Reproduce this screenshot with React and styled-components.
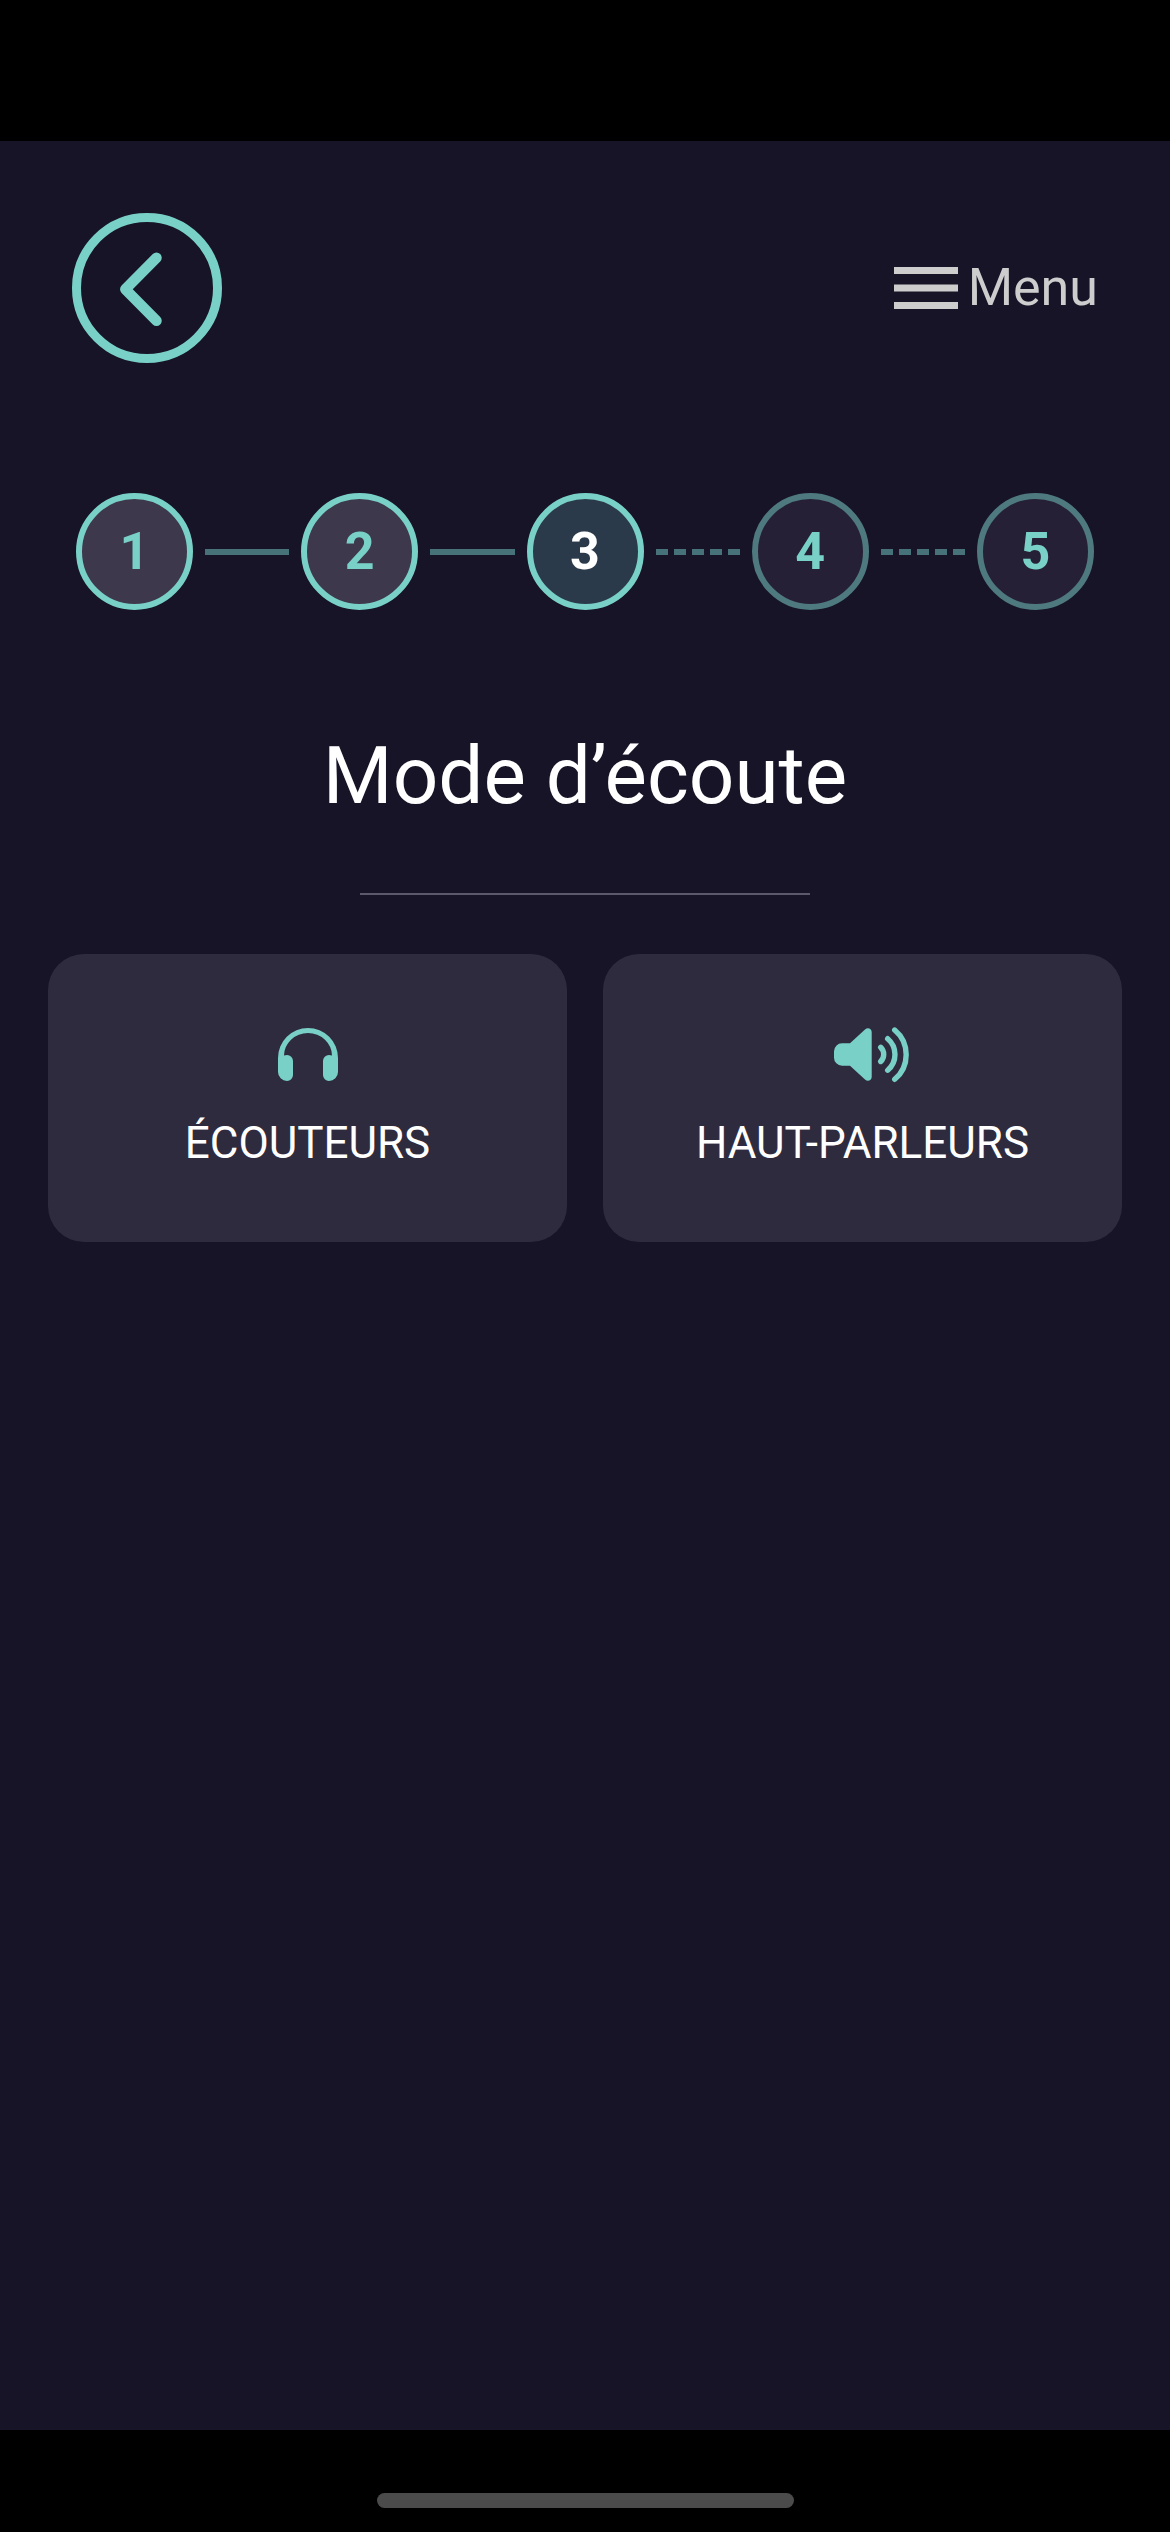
import React, { useState } from "react";
import styled, { createGlobalStyle } from "styled-components";

const steps = [
  { number: 1, status: "done" },
  { number: 2, status: "done" },
  { number: 3, status: "current" },
  { number: 4, status: "upcoming" },
  { number: 5, status: "upcoming" },
];

function App() {
  const [mode, setMode] = useState(null);

  return (
    <>
      <GlobalStyle />
      <Page>
        <StatusBar />
        <Main>
          <Header>
            <BackButton type="button" aria-label="Retour">
              <svg viewBox="0 0 132 132" aria-hidden="true">
                <path d="M75.5 35.8 44.3 67.3l31.2 31.5" />
              </svg>
            </BackButton>
            <MenuButton type="button">
              <svg viewBox="0 0 64 42" aria-hidden="true">
                <path d="M0 0h64v7H0zM0 17.5h64v7H0zM0 35h64v7H0z" />
              </svg>
              Menu
            </MenuButton>
          </Header>

          <Stepper>
            {steps.map(({ number, status }, i) => (
              <React.Fragment key={number}>
                {i > 0 && <Connector $dashed={status === "upcoming"} />}
                <Step $status={status} aria-current={status === "current" ? "step" : undefined}>
                  {number}
                </Step>
              </React.Fragment>
            ))}
          </Stepper>

          <Title>Mode d’écoute</Title>
          <Divider />

          <Choices>
            <Choice
              type="button"
              aria-pressed={mode === "headphones"}
              onClick={() => setMode("headphones")}
            >
              <HeadphonesIcon />
              Écouteurs
            </Choice>
            <Choice
              type="button"
              aria-pressed={mode === "speakers"}
              onClick={() => setMode("speakers")}
            >
              <SpeakerIcon />
              Haut-parleurs
            </Choice>
          </Choices>
        </Main>
        <BottomBar>
          <HomeIndicator />
        </BottomBar>
      </Page>
    </>
  );
}

// Icons
const HeadphonesIcon = () => (
  <svg width="60" height="54" viewBox="0 0 60 54" aria-hidden="true">
    <path
      fill="currentColor"
      d="M0 30a30 30 0 0 1 60 0v14a9 9 0 0 1-9 9 6 6 0 0 1-6-6V33a6 6 0 0 1 6-6c1 0 2 .2 3 .6a24 22.5 0 0 0-48 0C7 27.2 8 27 9 27a6 6 0 0 1 6 6v14a6 6 0 0 1-6 6 9 9 0 0 1-9-9z"
    />
  </svg>
);

const SpeakerIcon = () => (
  <svg width="92" height="54" viewBox="-17 0 92 54" overflow="visible" aria-hidden="true">
    <path
      fill="currentColor"
      d="M8 15.3h8L31 1.4c2.6-2.4 6.7-.9 6.7 2.6v45c0 3.5-4.1 5-6.7 2.6L16 37.7H8a8 8 0 0 1-8-8v-6.4a8 8 0 0 1 8-8z"
    />
    <g fill="none" stroke="currentColor" strokeWidth="5.4" strokeLinecap="round">
      <path d="M46.7 19.3a9.9 9.9 0 0 1 0 14.2" />
      <path d="M53.7 10.7a20.7 20.7 0 0 1 0 31.5" />
      <path d="M60.7 2a32.2 32.2 0 0 1 0 49.3" />
    </g>
  </svg>
);

// styled components
const GlobalStyle = createGlobalStyle`
  * {
    box-sizing: border-box;
  }
  body {
    margin: 0;
    background: #000;
    font-family: Roboto, "Open Sans", sans-serif;
  }
  button {
    border: none;
    background: none;
    padding: 0;
    font-family: inherit;
    cursor: pointer;
  }
`;

const Page = styled.div`
  min-height: 100vh;
  display: flex;
  flex-direction: column;
  color: #fff;
`;

const StatusBar = styled.div`
  height: 141px;
  background: #000;
`;

const Main = styled.main`
  flex: 1;
  display: flex;
  flex-direction: column;
  background: #171427;
`;

const Header = styled.header`
  display: flex;
  justify-content: space-between;
  align-items: center;
  padding: 72px 72px 0;
`;

const BackButton = styled.button`
  width: 150px;
  height: 150px;
  border: 9px solid #79d0c6;
  border-radius: 50%;

  svg {
    display: block;
    fill: none;
    stroke: #79d0c6;
    stroke-width: 10.5;
    stroke-linecap: round;
    stroke-linejoin: round;
  }
`;

const MenuButton = styled.button`
  display: flex;
  align-items: center;
  gap: 10px;
  color: #cdcdcd;
  font-size: 52px;
  line-height: 60px;

  svg {
    width: 64px;
    fill: currentColor;
  }
`;

const Stepper = styled.div`
  display: flex;
  align-items: center;
  margin-top: 130px;
  padding: 0 76px;
`;

const stepColors = {
  done: { border: "#79d0c6", background: "#3d384b", text: "#79d0c6" },
  current: { border: "#79d0c6", background: "#2b3a4a", text: "#fff" },
  upcoming: { border: "#4e797e", background: "#252035", text: "#79d0c6" },
};

const Step = styled.div`
  width: 117px;
  height: 117px;
  display: flex;
  justify-content: center;
  align-items: center;
  border: 6px solid ${({ $status }) => stepColors[$status].border};
  border-radius: 50%;
  background: ${({ $status }) => stepColors[$status].background};
  color: ${({ $status }) => stepColors[$status].text};
  font-size: 52px;
  font-weight: 700;
`;

const Connector = styled.div`
  flex: 1;
  height: 6px;
  margin: 0 12px;
  background: ${({ $dashed }) =>
    $dashed
      ? "repeating-linear-gradient(to right, #48727a 0 12px, transparent 12px 18px)"
      : "#48727a"};
`;

const Title = styled.h1`
  margin: 118px 48px 0;
  font-size: 80px;
  font-weight: 400;
  line-height: 96px;
  text-align: center;
`;

const Divider = styled.hr`
  width: 450px;
  height: 2px;
  margin: 69px auto 0;
  border: none;
  background: #5d596c;
`;

const Choices = styled.div`
  display: grid;
  grid-template-columns: 1fr 1fr;
  gap: 36px;
  padding: 59px 48px 0;
`;

const Choice = styled.button`
  display: flex;
  flex-direction: column;
  align-items: center;
  gap: 35px;
  && {
    padding: 74px 24px 73px;
    background: #2f2b3e;
  }
  border-radius: 36px;
  color: #fff;
  font-size: 44px;
  line-height: 52px;
  text-transform: uppercase;

  svg {
    color: #79d0c6;
  }
`;

const BottomBar = styled.footer`
  height: 102px;
  display: flex;
  justify-content: center;
  align-items: flex-end;
  padding-bottom: 24px;
  background: #000;
`;

const HomeIndicator = styled.div`
  width: 417px;
  height: 15px;
  border-radius: 8px;
  background: #4b4b4b;
`;

export default App;
